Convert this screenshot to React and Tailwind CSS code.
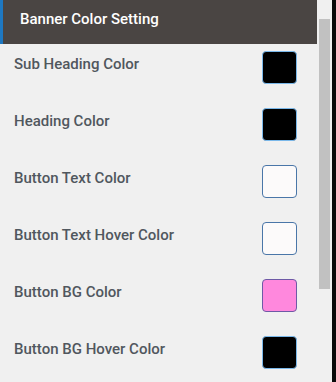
import React from 'react';

const rows = [
  { label: 'Sub Heading Color', color: '#000000', border: '#7ab8ea' },
  { label: 'Heading Color', color: '#000000', border: '#7ab8ea' },
  { label: 'Button Text Color', color: '#fcfafa', border: '#4a76a8' },
  { label: 'Button Text Hover Color', color: '#fcfafa', border: '#4a76a8' },
  { label: 'Button BG Color', color: '#ff88dd', border: '#6e5aa6' },
  { label: 'Button BG Hover Color', color: '#000000', border: '#7ab8ea' },
];

export default function App() {
  return (
    <div
      className="flex h-[382px] w-[336px] overflow-hidden bg-[#f0f0f0]"
      style={{ fontFamily: 'Roboto, "Noto Sans", sans-serif' }}
    >
      <div className="flex w-[317px] flex-col">
        <div className="flex h-[44px] shrink-0">
          <div className="w-[3px] bg-[#1e78c2]" />
          <div className="flex flex-1 items-start bg-[#4a4543] pl-[17px] pt-[9px]">
            <span className="text-[15px] font-medium leading-[20px] text-white">
              Banner Color Setting
            </span>
          </div>
        </div>
        <div className="flex flex-col">
          {rows.map((row) => (
            <div key={row.label} className="flex h-[57px] shrink-0 items-start justify-between pl-[14px] pr-[20px]">
              <span className="mt-[10px] text-[15px] font-medium leading-[20px] text-[#50575e]">
                {row.label}
              </span>
              <div
                className="mt-[7px] h-[33px] w-[35px] rounded-[4px] border"
                style={{ backgroundColor: row.color, borderColor: row.border }}
              />
            </div>
          ))}
        </div>
      </div>
      <div className="w-[15px] bg-[#f0f0f0] pl-[2px] pt-[19px]">
        <div className="h-[270px] w-[11px] bg-[#c1c1c1]" />
      </div>
      <div className="w-[4px] bg-[#0a0a0a]" />
    </div>
  );
}
